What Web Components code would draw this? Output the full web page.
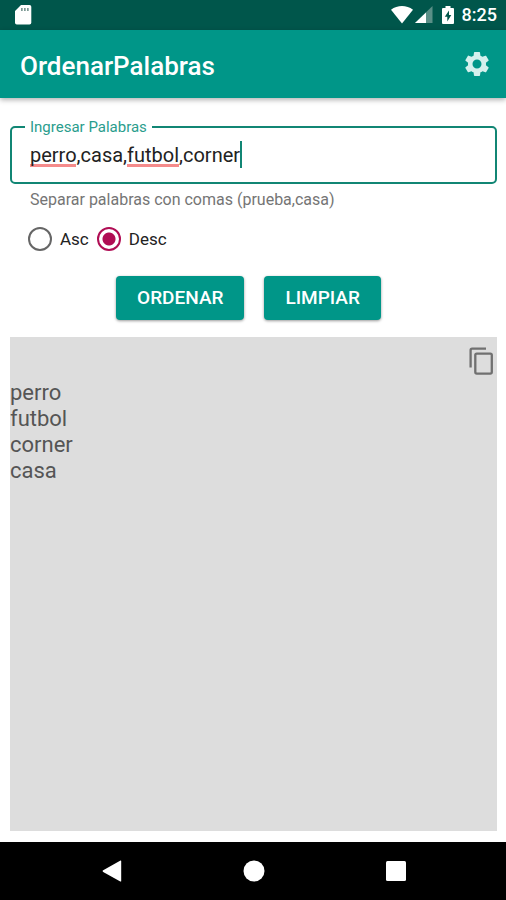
<!DOCTYPE html>
<html lang="es">
<head>
<meta charset="utf-8">
<meta name="viewport" content="width=device-width, initial-scale=1">
<title>OrdenarPalabras</title>
<style>
  body { margin: 0; background: #fff; font-family: Roboto, "Liberation Sans", sans-serif; color: #222; }
</style>
</head>
<body>
<op-app></op-app>
<script>
const define = (name, html, setup) => {
  const template = document.createElement('template');
  template.innerHTML = '<style>*{box-sizing:border-box}</style>' + html;
  customElements.define(name, class extends HTMLElement {
    constructor() {
      super();
      this.attachShadow({ mode: 'open' }).append(template.content.cloneNode(true));
      if (setup) setup(this, this.shadowRoot);
    }
  });
};

define('op-status-bar', `
<style>
  :host { display: flex; align-items: center; height: 30px; padding: 0 9px 0 14px; background: #00564b; color: #fff; font-size: 18px; font-weight: 500; }
  .spacer { flex: 1; }
  .wifi { margin-right: 2px; }
  .signal { margin-right: 9px; }
  .battery { margin-right: 8px; }
  svg { display: block; }
  time { line-height: 32px; }
</style>
<svg width="18" height="20" viewBox="0 0 18 20"><path fill="#fff" d="M7 0h8.500a1.800 1.800 0 0 1 1.800 1.800v16a1.800 1.800 0 0 1-1.800 1.800H2.800A1.800 1.800 0 0 1 1 17.800V6z"/><path fill="#7d9a95" d="M7 3h1.700v3H7zM10 3h1.700v3H10zM13 3h1.700v3H13z"/></svg>
<span class="spacer"></span>
<svg class="wifi" width="22" height="18" viewBox="0 0 22 18"><path fill="#fff" d="M0 3.800C6.500-1.200 15.500-1.200 22 3.800L11 17.500z"/></svg>
<svg class="signal" width="18" height="18" viewBox="0 0 18 18"><path fill="#5a8f87" d="M17.500 0v17H0z"/><path fill="#fff" d="M11 6.500V17H0z"/></svg>
<svg class="battery" width="12" height="18" viewBox="0 0 12 18"><path fill="#fff" d="M3.500 0h5v2H11a1 1 0 0 1 1 1v14a1 1 0 0 1-1 1H1a1 1 0 0 1-1-1V3a1 1 0 0 1 1-1h2.500z"/><path fill="#00564b" d="M7 4.500 2.800 10.800H5.300V15.500L9.300 9H7z"/></svg>
<time datetime="08:25">8:25</time>`);

define('op-app-bar', `
<style>
  :host { display: flex; align-items: center; justify-content: space-between; height: 68px; padding: 0 14px 0 20px; background: #009688; color: #fff; box-shadow: 0 2px 5px rgba(0,0,0,.3); z-index: 1; }
  h1 { margin: 0; font-size: 26px; line-height: 32px; font-weight: 500; padding-top: 3px; }
  button { border: 0; padding: 0; background: none; display: block; }
  svg { display: block; }
</style>
<h1><slot></slot></h1>
<button type="button" aria-label="Ajustes"><svg width="30" height="30" viewBox="0 0 24 24"><path fill="#d5f0ed" d="M19.140 12.940c.04-.3.06-.61.06-.94 0-.32-.02-.64-.07-.94l2.030-1.580c.18-.14.23-.41.12-.61l-1.920-3.320c-.12-.22-.37-.29-.59-.22l-2.390.96c-.5-.38-1.030-.7-1.620-.94l-.36-2.540c-.04-.24-.24-.41-.48-.41h-3.840c-.24 0-.43.17-.47.41l-.36 2.540c-.59.24-1.130.57-1.620.94l-2.390-.96c-.22-.08-.47 0-.59.22L2.740 8.870c-.12.21-.08.47.12.61l2.030 1.580c-.05.3-.09.63-.09.94s.02.64.07.94l-2.030 1.580c-.18.14-.23.41-.12.61l1.920 3.320c.12.22.37.29.59.22l2.390-.96c.5.38 1.030.7 1.620.94l.36 2.540c.05.24.24.41.48.41h3.840c.24 0 .44-.17.47-.41l.36-2.540c.59-.24 1.130-.56 1.620-.94l2.390.96c.22.08.47 0 .59-.22l1.920-3.320c.12-.22.07-.47-.12-.61l-2.010-1.580zM12 15.600A3.600 3.600 0 1 1 12 8.400a3.600 3.600 0 0 1 0 7.200z"/></svg></button>`);

define('op-text-field', `
<style>
  :host { display: block; }
  fieldset { margin: 0; min-width: 0; border: 2px solid #118674; border-radius: 5px; padding: 0 13px 8px; }
  legend { padding: 0 5px; font-size: 15px; line-height: 18px; color: #2a9d8d; }
  label { display: block; }
  /* Gradient layers: the spelling marks under two words, then the text cursor. */
  input { display: block; width: 100%; height: 38px; margin: 0; border: 0; outline: 0; padding: 0 5px; font: 20px/38px Roboto, "Liberation Sans", sans-serif; color: #222; caret-color: transparent;
    background:
      linear-gradient(#f58b8b, #f58b8b) 5px 28px / 46px 3px no-repeat,
      linear-gradient(#f58b8b, #f58b8b) 102px 28px / 52px 3px no-repeat,
      linear-gradient(#118674, #118674) 215px 5px / 2px 27px no-repeat; }
  p { margin: 7px 0 0; padding-left: 20px; font-size: 16px; line-height: 18px; color: #757575; }
</style>
<fieldset>
  <legend><label for="words">Ingresar Palabras</label></legend>
  <input id="words" type="text" spellcheck="false" autocomplete="off" aria-describedby="hint">
</fieldset>
<p id="hint"><slot></slot></p>`, (host, root) => {
  root.querySelector('input').value = 'perro,casa,futbol,corner';
});

define('op-order-choice', `
<style>
  :host { display: flex; gap: 8px; padding-left: 18px; }
  label { display: flex; align-items: center; gap: 8px; font-size: 17px; line-height: 26px; color: #222; }
  input { appearance: none; width: 24px; height: 24px; margin: 0; border: 2px solid #666; border-radius: 50%; }
  input:checked { border-color: #b00d54; background: radial-gradient(circle, #b00d54 0 6px, transparent 7px); }
</style>
<label><input type="radio" name="order" value="asc">Asc</label>
<label><input type="radio" name="order" value="desc" checked>Desc</label>`);

define('op-button', `
<style>
  :host { display: block; }
  button { display: block; height: 44px; border: 0; border-radius: 4px; padding: 0 21px; background: #009688; color: #fff; font: 500 19px/44px Roboto, "Liberation Sans", sans-serif; text-transform: uppercase; box-shadow: 0 1px 3px rgba(0,0,0,.4); }
</style>
<button type="button"><slot></slot></button>`);

define('op-result', `
<style>
  :host { display: flex; flex-direction: column; background: #ddd; }
  button { align-self: flex-end; border: 0; margin: 9px 1px 0 0; padding: 0; background: none; }
  svg { display: block; }
  .list { padding-top: 3px; font-size: 22px; line-height: 26px; color: #555; white-space: pre-line; }
</style>
<button type="button" aria-label="Copiar"><svg width="31" height="31" viewBox="0 0 31 31" fill="none" stroke="#707070" stroke-width="2.300"><path d="M5.600 21.500V4.200a1.500 1.500 0 0 1 1.500-1.500H21"/><rect x="10.300" y="7.600" width="16.500" height="20" rx="1.500"/></svg></button>
<div class="list"><slot></slot></div>`);

define('op-nav-bar', `
<style>
  :host { display: flex; align-items: center; justify-content: center; gap: 112px; height: 58px; padding-left: 2px; background: #000; }
  button { border: 0; padding: 0; background: none; width: 30px; height: 30px; display: grid; place-items: center; }
</style>
<button type="button" aria-label="Atrás"><svg width="20" height="22" viewBox="0 0 20 22"><path fill="#fff" d="M18.500.5a.6.600 0 0 1 .7.600v19.800a.6.600 0 0 1-.9.500L1.200 12a1 1 0 0 1 0-1.800z"/></svg></button>
<button type="button" aria-label="Inicio"><svg width="22" height="22" viewBox="0 0 22 22"><circle cx="11" cy="11" r="10.500" fill="#fff"/></svg></button>
<button type="button" aria-label="Recientes"><svg width="20" height="20" viewBox="0 0 20 20"><rect width="20" height="20" rx="1.500" fill="#fff"/></svg></button>`);

define('op-app', `
<style>
  :host { display: flex; flex-direction: column; min-height: 100vh; box-sizing: border-box; }
  main { flex: 1; display: flex; flex-direction: column; padding: 20px 9px 11px 10px; }
  op-order-choice { margin-top: 17px; }
  .actions { display: flex; justify-content: center; gap: 20px; margin: 24px 0 17px; padding-right: 10px; }
  op-result { flex: 1; }
</style>
<op-status-bar></op-status-bar>
<op-app-bar>OrdenarPalabras</op-app-bar>
<main>
  <op-text-field>Separar palabras con comas (prueba,casa)</op-text-field>
  <op-order-choice></op-order-choice>
  <div class="actions"><op-button>Ordenar</op-button><op-button>Limpiar</op-button></div>
  <op-result>perro
futbol
corner
casa</op-result>
</main>
<op-nav-bar></op-nav-bar>`);
</script>
</body>
</html>
